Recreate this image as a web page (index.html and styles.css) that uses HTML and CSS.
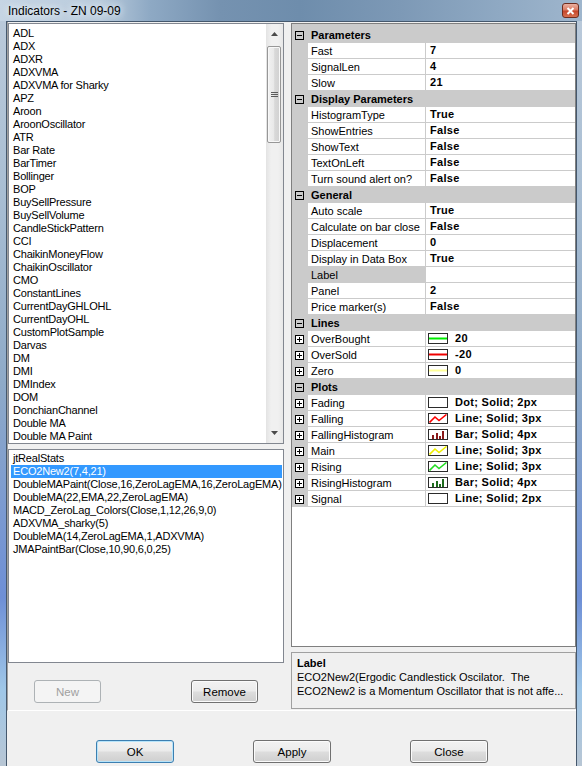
FILE: index.html
```html
<!DOCTYPE html>
<html lang="en">
<head>
  <meta charset="UTF-8" />
  <title>Indicators - ZN 09-09</title>
  <link rel="stylesheet" href="styles.css">
</head>
<body>

  <svg class="defs" width="0" height="0">
    <symbol id="minus" viewBox="0 0 9 9">
      <rect x="0.5" y="0.5" width="8" height="8" fill="none" stroke="#000"/>
      <path d="M2 4.5h5" stroke="#000"/>
    </symbol>
    <symbol id="plus" viewBox="0 0 9 9">
      <rect x="0.5" y="0.5" width="8" height="8" fill="#fff" stroke="#000"/>
      <path d="M2 4.5h5M4.5 2v5" stroke="#000"/>
    </symbol>
  </svg>

  <div class="window">
    <div class="titlebar">
      <span class="title">Indicators - ZN 09-09</span>
      <span class="close">
        <svg width="9" height="8" viewBox="0 0 9 8"><path d="M1.5 1l6 6M7.5 1l-6 6" stroke="#fff" stroke-width="2"/></svg>
      </span>
    </div>

    <div class="client">
      <div class="main">

        <div class="left">
          <div class="list list-all">
            <ul class="items">
              <li>ADL</li>
              <li>ADX</li>
              <li>ADXR</li>
              <li>ADXVMA</li>
              <li>ADXVMA for Sharky</li>
              <li>APZ</li>
              <li>Aroon</li>
              <li>AroonOscillator</li>
              <li>ATR</li>
              <li>Bar Rate</li>
              <li>BarTimer</li>
              <li>Bollinger</li>
              <li>BOP</li>
              <li>BuySellPressure</li>
              <li>BuySellVolume</li>
              <li>CandleStickPattern</li>
              <li>CCI</li>
              <li>ChaikinMoneyFlow</li>
              <li>ChaikinOscillator</li>
              <li>CMO</li>
              <li>ConstantLines</li>
              <li>CurrentDayGHLOHL</li>
              <li>CurrentDayOHL</li>
              <li>CustomPlotSample</li>
              <li>Darvas</li>
              <li>DM</li>
              <li>DMI</li>
              <li>DMIndex</li>
              <li>DOM</li>
              <li>DonchianChannel</li>
              <li>Double MA</li>
              <li>Double MA Paint</li>
            </ul>
            <div class="scrollbar">
              <div class="sb-btn">
                <svg width="7" height="4" viewBox="0 0 7 4"><path d="M0 4L3.5 0 7 4z" fill="#4a4a4a"/></svg>
              </div>
              <div class="sb-thumb">
                <svg width="7" height="5" viewBox="0 0 7 5"><path d="M0 0.5h7M0 2.5h7M0 4.5h7" stroke="#5c5c5c"/></svg>
              </div>
              <div class="sb-track"></div>
              <div class="sb-btn">
                <svg width="7" height="4" viewBox="0 0 7 4"><path d="M0 0L3.5 4 7 0z" fill="#4a4a4a"/></svg>
              </div>
            </div>
          </div>

          <div class="list list-applied">
            <ul class="items">
              <li>jtRealStats</li>
              <li class="selected">ECO2New2(7,4,21)</li>
              <li>DoubleMAPaint(Close,16,ZeroLagEMA,16,ZeroLagEMA)</li>
              <li>DoubleMA(22,EMA,22,ZeroLagEMA)</li>
              <li>MACD_ZeroLag_Colors(Close,1,12,26,9,0)</li>
              <li>ADXVMA_sharky(5)</li>
              <li>DoubleMA(14,ZeroLagEMA,1,ADXVMA)</li>
              <li>JMAPaintBar(Close,10,90,6,0,25)</li>
            </ul>
          </div>

          <div class="left-buttons">
            <button class="btn small" disabled>New</button>
            <button class="btn small">Remove</button>
          </div>
        </div>

        <div class="right">
          <div class="grid">
            <div class="row cat"><span class="m"><svg class="tog"><use href="#minus"/></svg></span><span class="name">Parameters</span></div>
            <div class="row"><span class="m"></span><span class="name">Fast</span><span class="value">7</span></div>
            <div class="row"><span class="m"></span><span class="name">SignalLen</span><span class="value">4</span></div>
            <div class="row"><span class="m"></span><span class="name">Slow</span><span class="value">21</span></div>

            <div class="row cat"><span class="m"><svg class="tog"><use href="#minus"/></svg></span><span class="name">Display Parameters</span></div>
            <div class="row"><span class="m"></span><span class="name">HistogramType</span><span class="value">True</span></div>
            <div class="row"><span class="m"></span><span class="name">ShowEntries</span><span class="value">False</span></div>
            <div class="row"><span class="m"></span><span class="name">ShowText</span><span class="value">False</span></div>
            <div class="row"><span class="m"></span><span class="name">TextOnLeft</span><span class="value">False</span></div>
            <div class="row"><span class="m"></span><span class="name">Turn sound alert on?</span><span class="value">False</span></div>

            <div class="row cat"><span class="m"><svg class="tog"><use href="#minus"/></svg></span><span class="name">General</span></div>
            <div class="row"><span class="m"></span><span class="name">Auto scale</span><span class="value">True</span></div>
            <div class="row"><span class="m"></span><span class="name">Calculate on bar close</span><span class="value">False</span></div>
            <div class="row"><span class="m"></span><span class="name">Displacement</span><span class="value">0</span></div>
            <div class="row"><span class="m"></span><span class="name">Display in Data Box</span><span class="value">True</span></div>
            <div class="row sel"><span class="m"></span><span class="name">Label</span><span class="value"></span></div>
            <div class="row"><span class="m"></span><span class="name">Panel</span><span class="value">2</span></div>
            <div class="row"><span class="m"></span><span class="name">Price marker(s)</span><span class="value">False</span></div>

            <div class="row cat"><span class="m"><svg class="tog"><use href="#minus"/></svg></span><span class="name">Lines</span></div>
            <div class="row"><span class="m"><svg class="tog"><use href="#plus"/></svg></span><span class="name">OverBought</span>
              <span class="value sw"><span class="swatch"><svg width="18" height="9"><path d="M0 4.5h18" stroke="#00ee00" stroke-width="2"/></svg></span>20</span></div>
            <div class="row"><span class="m"><svg class="tog"><use href="#plus"/></svg></span><span class="name">OverSold</span>
              <span class="value sw"><span class="swatch"><svg width="18" height="9"><path d="M0 4.5h18" stroke="#ee0000" stroke-width="2"/></svg></span>-20</span></div>
            <div class="row"><span class="m"><svg class="tog"><use href="#plus"/></svg></span><span class="name">Zero</span>
              <span class="value sw"><span class="swatch"><svg width="18" height="9"><path d="M0 4.5h18" stroke="#ffff99" stroke-width="2"/></svg></span>0</span></div>

            <div class="row cat"><span class="m"><svg class="tog"><use href="#minus"/></svg></span><span class="name">Plots</span></div>
            <div class="row"><span class="m"><svg class="tog"><use href="#plus"/></svg></span><span class="name">Fading</span>
              <span class="value sw"><span class="swatch"></span>Dot; Solid; 2px</span></div>
            <div class="row"><span class="m"><svg class="tog"><use href="#plus"/></svg></span><span class="name">Falling</span>
              <span class="value sw"><span class="swatch"><svg width="18" height="9"><polyline points="0.5,8.5 6,3 10,6.5 17.5,0.5" fill="none" stroke="#ff0000" stroke-width="1.6"/></svg></span>Line; Solid; 3px</span></div>
            <div class="row"><span class="m"><svg class="tog"><use href="#plus"/></svg></span><span class="name">FallingHistogram</span>
              <span class="value sw"><span class="swatch"><svg width="18" height="9"><path d="M3 5h2v4H3zM7 3h2v6H7zM10 6h2v3h-2zM13 1h2v8h-2z" fill="#8b1a1a"/></svg></span>Bar; Solid; 4px</span></div>
            <div class="row"><span class="m"><svg class="tog"><use href="#plus"/></svg></span><span class="name">Main</span>
              <span class="value sw"><span class="swatch"><svg width="18" height="9"><polyline points="0.5,8.5 6,3 10,6.5 17.5,0.5" fill="none" stroke="#f0f000" stroke-width="1.6"/></svg></span>Line; Solid; 3px</span></div>
            <div class="row"><span class="m"><svg class="tog"><use href="#plus"/></svg></span><span class="name">Rising</span>
              <span class="value sw"><span class="swatch"><svg width="18" height="9"><polyline points="0.5,8.5 6,3 10,6.5 17.5,0.5" fill="none" stroke="#22dd22" stroke-width="1.6"/></svg></span>Line; Solid; 3px</span></div>
            <div class="row"><span class="m"><svg class="tog"><use href="#plus"/></svg></span><span class="name">RisingHistogram</span>
              <span class="value sw"><span class="swatch"><svg width="18" height="9"><path d="M3 5h2v4H3zM7 3h2v6H7zM10 6h2v3h-2zM13 1h2v8h-2z" fill="#1d6b1d"/></svg></span>Bar; Solid; 4px</span></div>
            <div class="row"><span class="m"><svg class="tog"><use href="#plus"/></svg></span><span class="name">Signal</span>
              <span class="value sw"><span class="swatch"></span>Line; Solid; 2px</span></div>
          </div>

          <div class="help">
            <div class="help-title">Label</div>
            <div class="help-text">ECO2New2(Ergodic Candlestick Oscilator.  The</div>
            <div class="help-text">ECO2New2 is a Momentum Oscillator that is not affe...</div>
          </div>
        </div>

      </div>

      <div class="dialog-buttons">
        <button class="btn default">OK</button>
        <button class="btn">Apply</button>
        <button class="btn">Close</button>
      </div>
    </div>
  </div>

</body>
</html>
```

FILE: styles.css
```css
* {
  margin: 0;
  padding: 0;
  box-sizing: border-box;
}

body {
  width: 582px;
  height: 766px;
  overflow: hidden;
  font-family: "Liberation Sans", Arial, sans-serif;
  font-size: 11px;
  color: #000;
}

.defs {
  display: none;
}

/* window frame */

.window {
  height: 766px;
  display: flex;
  flex-direction: column;
  background: linear-gradient(180deg, #bccbdb 0%, #a9bed3 25%, #8eaac8 50%, #6e8fd6 78%, #9fc7e8 90%, #b8c6d4 100%);
}

.titlebar {
  height: 21px;
  display: flex;
  align-items: center;
  padding: 0 3px 0 8px;
  background: linear-gradient(90deg, #c6d5e4 0px, #b9cbdc 100px, #8ea9c4 150px, #7592b0 220px, #6e8dac 300px, #7d99b6 400px, #8fa9c3 500px, #9fb6cd 582px);
}

.title {
  font-size: 12px;
  color: #000;
  text-shadow: 0 0 6px #e8f0f8, 0 0 10px #e8f0f8;
}

.close {
  margin-left: auto;
  width: 17px;
  height: 15px;
  display: flex;
  align-items: center;
  justify-content: center;
  border: 1px solid #6e2c1e;
  border-radius: 3px;
  background: linear-gradient(180deg, #eab0a1 0%, #d97b63 45%, #c5462b 55%, #d8704f 100%);
}

.client {
  flex: 1;
  display: flex;
  flex-direction: column;
  margin: 0 5px 0 6px;
  background: #f0f0f0;
  border: 1px solid #45586d;
  border-bottom: none;
}

.main {
  height: 689px;
  display: flex;
  padding-top: 1px;
  border-left: 1px solid #a0a0a0;
  border-bottom: 1px solid #fff;
}

/* left side: indicator lists */

.left {
  width: 276px;
  display: flex;
  flex-direction: column;
}

.list {
  background: #fff;
  border: 1px solid #828790;
}

.list-all {
  height: 421px;
  display: flex;
}

.list-applied {
  height: 214px;
  margin-top: 5px;
}

.items {
  list-style: none;
  flex: 1;
  overflow: hidden;
  padding: 3px 1px 0 2px;
}

.list-applied .items {
  padding-top: 2px;
}

.items li {
  height: 13px;
  line-height: 13px;
  padding-left: 2px;
  white-space: nowrap;
  letter-spacing: -0.2px;
}

.items li.selected {
  background: #3399ff;
  color: #fff;
}

.scrollbar {
  width: 17px;
  display: flex;
  flex-direction: column;
  background: linear-gradient(90deg, #e3e3e3, #f0f0f0 30%, #f0f0f0 70%, #e8e8e8);
}

.sb-btn {
  height: 20px;
  display: flex;
  align-items: center;
  justify-content: center;
}

.sb-thumb {
  height: 97px;
  margin: 2px 2px 0 1px;
  display: flex;
  align-items: center;
  justify-content: center;
  border: 1px solid #979797;
  border-radius: 2px;
  background: linear-gradient(90deg, #f2f2f2 0%, #e8e8e8 50%, #d9d9d9 55%, #d0d0d0 100%);
  box-shadow: inset 0 0 0 1px #f8f8f8;
}

.sb-track {
  flex: 1;
}

.left-buttons {
  display: flex;
  gap: 90px;
  padding: 17px 0 0 26px;
}

/* right side: property grid */

.right {
  width: 285px;
  margin-left: 7px;
  display: flex;
  flex-direction: column;
}

.grid {
  height: 624px;
  border: 1px solid #7f7f7f;
  padding-top: 3px;
  background: linear-gradient(180deg, #cbcbcb 0, #cbcbcb 3px, #fff 3px);
}

.row {
  display: grid;
  grid-template-columns: 16px 117px 1fr;
  height: 16px;
}

.row .m {
  background: #cbcbcb;
  display: flex;
  align-items: center;
  padding-left: 3px;
}

.tog {
  width: 9px;
  height: 9px;
}

.row .name {
  padding-left: 3px;
  line-height: 16px;
  white-space: nowrap;
  overflow: hidden;
  background: #fff;
  border-bottom: 1px solid #cbcbcb;
}

.row .value {
  display: flex;
  align-items: center;
  gap: 7px;
  padding-left: 4px;
  line-height: 15px;
  font-weight: bold;
  letter-spacing: 0.3px;
  white-space: nowrap;
  background: #fff;
  border-left: 1px solid #cbcbcb;
  border-bottom: 1px solid #cbcbcb;
}

.row .value.sw {
  padding-left: 2px;
}

.row.cat {
  background: #cbcbcb;
}

.row.cat .name {
  grid-column: 2 / 4;
  font-weight: bold;
  background: none;
  border-bottom: none;
}

.row.sel .name {
  background: #cbcbcb;
}

.swatch {
  width: 20px;
  height: 11px;
  display: flex;
  border: 1px solid #2b2b2b;
  background: #fff;
}

.help {
  height: 57px;
  margin-top: 5px;
  padding: 3px 5px 0;
  border: 1px solid #a0a0a0;
  line-height: 14px;
}

.help-title {
  font-weight: bold;
}

.help-text {
  white-space: pre;
}

/* buttons */

.dialog-buttons {
  display: flex;
  gap: 79px;
  padding: 29px 0 0 89px;
}

.btn {
  width: 78px;
  height: 23px;
  font-family: "Liberation Sans", Arial, sans-serif;
  font-size: 11.5px;
  color: #000;
  border: 1px solid #707070;
  border-radius: 3px;
  background: linear-gradient(180deg, #f2f2f2 0%, #ebebeb 48%, #dddddd 52%, #cfcfcf 100%);
  box-shadow: inset 0 0 0 1px #fbfbfb;
}

.btn.small {
  width: 67px;
}

.btn.default {
  border-color: #3c7fb1;
  box-shadow: inset 0 0 0 1px #b7e4fa;
}

.btn:disabled {
  color: #a0a0a0;
  border-color: #adb2b5;
  background: #f4f4f4;
  box-shadow: none;
}
```
